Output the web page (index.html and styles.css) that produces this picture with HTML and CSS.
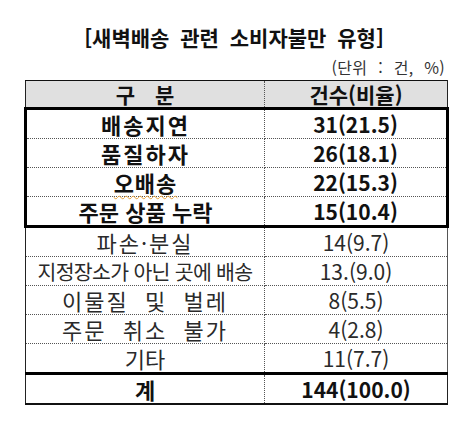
FILE: index.html
```html
<!DOCTYPE html>
<html lang="ko">
<head>
<meta charset="utf-8">
<title>새벽배송 관련 소비자불만 유형</title>
<link rel="stylesheet" href="styles.css">
</head>
<body>
<div class="page">
  <h1 class="title">[새벽배송 관련 소비자불만 유형]</h1>
  <div class="unit">(단위 : 건, %)</div>
  <table class="grid">
    <colgroup><col class="c1"><col class="c2"></colgroup>
    <thead>
      <tr class="head"><th class="sp">구 분</th><th>건수(비율)</th></tr>
    </thead>
    <tbody>
      <tr class="hl first"><td class="k ls2">배송지연</td><td>31(21.5)</td></tr>
      <tr class="hl"><td class="k ls2">품질하자</td><td>26(18.1)</td></tr>
      <tr class="hl"><td class="k ls1"><span class="spell">오배송</span></td><td>22(15.3)</td></tr>
      <tr class="hl last"><td class="k">주문 상품 누락</td><td>15(10.4)</td></tr>
      <tr class="norm"><td class="k ls2">파손·분실</td><td>14(9.7)</td></tr>
      <tr class="norm"><td class="small">지정장소가 아닌 곳에 배송</td><td>13.(9.0)</td></tr>
      <tr class="norm"><td class="k wide">이물질 및 벌레</td><td>8(5.5)</td></tr>
      <tr class="norm"><td class="k wide">주문 취소 불가</td><td>4(2.8)</td></tr>
      <tr class="norm"><td class="k">기타</td><td>11(7.7)</td></tr>
      <tr class="total"><td class="k">계</td><td>144(100.0)</td></tr>
    </tbody>
  </table>
</div>
</body>
</html>
```

FILE: styles.css
```css
html, body {
  margin: 0;
  padding: 0;
  background: #ffffff;
}

body {
  font-family: "Noto Sans CJK KR", "Noto Sans", sans-serif;
  color: #111;
}

.page {
  width: 472px;
  height: 426px;
  padding-top: 25px;
  box-sizing: border-box;
}

.title {
  margin: 0;
  font-size: 21px;
  line-height: 24px;
  font-weight: 700;
  text-align: center;
  padding-right: 4px;
  word-spacing: 5px;
  letter-spacing: 0;
}

.unit {
  margin-top: 10px;
  height: 16px;
  font-size: 16px;
  line-height: 16px;
  text-align: right;
  padding-right: 27px;
  color: #333;
  word-spacing: 6px;
  letter-spacing: 0.3px;
}

.grid {
  margin-top: 5px;
  margin-left: 24px;
  width: 422px;
  border-collapse: collapse;
  table-layout: fixed;
}

.c1 { width: 239px; }
.c2 { width: 183px; }

.grid th,
.grid td {
  padding: 0;
  text-align: center;
  vertical-align: middle;
  font-size: 21px;
  line-height: 26px;
  height: 28px;
  border-left: 1px solid #222;
  border-right: 1px solid #222;
  border-top: 1px dotted #555;
  border-bottom: 1px dotted #555;
  white-space: nowrap;
}

.grid th + th,
.grid td + td {
  border-left: 1px dotted #555;
}

.grid th:first-child,
.grid td:first-child {
  border-right: 1px dotted #555;
}

.grid td.k {
  font-size: 22px;
}

.grid td.ls1 { letter-spacing: 1px; }
.grid td.ls2 { letter-spacing: 2px; }

.head th {
  background: #e0e0e0;
  font-weight: 700;
  border-top: 1px solid #111;
  height: 26px;
}

.head .sp {
  word-spacing: 14px;
}

.hl td {
  font-weight: 700;
  color: #111;
}

.hl td:first-child {
  border-left: 3px solid #000;
}

.hl td:last-child {
  border-right: 3px solid #000;
}

.hl.first td {
  border-top: 3px solid #000;
}

.hl.last td {
  border-bottom: 3px solid #000;
}

.spell {
  text-decoration: underline wavy #e9a23b;
  text-decoration-thickness: 1px;
  text-underline-offset: 3px;
}

.norm td {
  font-weight: 400;
  color: #2a2a2a;
}

.norm td:last-child {
  border-right: 1px solid #555;
}

.grid td.wide {
  letter-spacing: 2px;
  word-spacing: 8px;
}

.grid td.small {
  font-size: 20.5px;
  letter-spacing: -0.7px;
}

.total td {
  font-weight: 700;
  color: #111;
  border-top: 3px solid #000;
  border-bottom: 2px solid #111;
}
```
